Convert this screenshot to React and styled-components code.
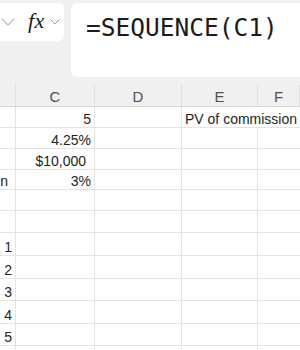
import styled, { createGlobalStyle } from 'styled-components'

const GlobalStyle = createGlobalStyle`
  html, body {
    margin: 0;
    padding: 0;
    background: #f0f0f0;
  }
  body {
    width: 300px;
    height: 350px;
    overflow: hidden;
    font-family: "Liberation Sans", Arial, sans-serif;
  }
`;

const Page = styled.div`
  display: flex;
  flex-direction: column;
  width: 300px;
  height: 350px;
  overflow: hidden;
`;

const Toolbar = styled.div`
  flex: none;
  display: flex;
  align-items: flex-start;
  gap: 7px;
  height: 85px;
  padding-top: 3px;
  box-sizing: border-box;
`;

const NameBox = styled.div`
  display: flex;
  align-items: center;
  width: 64px;
  height: 38px;
  background: #fff;
  border-radius: 0 5px 5px 0;
  box-sizing: border-box;
  padding-left: 1px;
`;

const Chevron = styled.svg`
  flex: none;
  margin-left: ${p => p.$ml || 0}px;
`;

const Fx = styled.span`
  font-family: "Liberation Serif", "Times New Roman", serif;
  font-style: italic;
  font-size: 22px;
  color: #1a1a1a;
  margin-left: 13px;
  letter-spacing: 0.5px;
  line-height: 1;
  margin-top: -3px;
`;

const FormulaBar = styled.div`
  flex: 1;
  height: 74px;
  background: #fff;
  border-radius: 6px 0 0 6px;
  padding: 10px 0 0 15px;
  box-sizing: border-box;
  font-family: "DejaVu Sans Mono", monospace;
  font-size: 24.5px;
  color: #1c1c1c;
  white-space: nowrap;
  overflow: hidden;
`;

const Grid = styled.div`
  flex: none;
  display: grid;
  grid-template-columns: 16px 79px 87px 76px 1fr;
  grid-template-rows: ${p => p.$rows};
`;

const HeadCell = styled.div`
  background: #f0f0f0;
  border-right: 1px solid #dedede;
  border-bottom: 1px solid #d6d6d6;
  color: #505050;
  font-size: 15px;
  display: flex;
  align-items: center;
  justify-content: center;
  padding-top: 2px;
  box-sizing: border-box;
`;

const Cell = styled.div`
  background: #fff;
  border-right: ${p => (p.$noRight ? 'none' : '1px solid #e4e4e4')};
  border-bottom: 1px solid #e4e4e4;
  grid-column: ${p => (p.$span ? `span ${p.$span}` : 'auto')};
  display: flex;
  align-items: flex-end;
  justify-content: ${p => (p.$left ? 'flex-start' : 'flex-end')};
  padding: 0 ${p => p.$pr ?? 3}px 0 ${p => (p.$left ? 3 : 0)}px;
  font-size: 14px;
  color: #1e1e1e;
  white-space: nowrap;
  overflow: hidden;
  box-sizing: border-box;
`;

const heights = [22, 21, 21, 21, 20, 21, 22, 23, 23, 22, 23, 22, 22];

const rows = [
  { C: '5', E: 'PV of commission' },
  { C: '4.25%' },
  { C: '$10,000', cpr: 8 },
  { B: 'n', bpr: 7, C: '3%' },
  {},
  {},
  { B: '1' },
  { B: '2' },
  { B: '3' },
  { B: '4' },
  { B: '5' },
  {},
];

const ChevronIcon = ({ color, size, ml }) => (
  <Chevron $ml={ml} width={size} height={size * 0.6} viewBox="0 0 10 6">
    <path d="M0.5 0.5 L5 5 L9.5 0.5" fill="none" stroke={color} strokeWidth="0.8" />
  </Chevron>
);

const App = () => {
  return (
    <Page>
      <GlobalStyle />
      <Toolbar>
        <NameBox>
          <ChevronIcon color="#b5b5b5" size={14} />
          <Fx>fx</Fx>
          <ChevronIcon color="#8a8a8a" size={10} ml={5} />
        </NameBox>
        <FormulaBar>=SEQUENCE(C1)</FormulaBar>
      </Toolbar>
      <Grid $rows={heights.map(h => h + 'px').join(' ')}>
        <HeadCell />
        <HeadCell>C</HeadCell>
        <HeadCell>D</HeadCell>
        <HeadCell>E</HeadCell>
        <HeadCell>F</HeadCell>
        {rows.map((r, i) => (
          <>
            <Cell key={`b${i}`} $pr={r.bpr}>{r.B}</Cell>
            <Cell key={`c${i}`} $pr={r.cpr}>{r.C}</Cell>
            <Cell key={`d${i}`} />
            {r.E ? (
              <Cell key={`e${i}`} $left $span={2} $noRight>{r.E}</Cell>
            ) : (
              <>
                <Cell key={`e${i}`} />
                <Cell key={`f${i}`} $noRight />
              </>
            )}
          </>
        ))}
      </Grid>
    </Page>
  )
}

export default App
